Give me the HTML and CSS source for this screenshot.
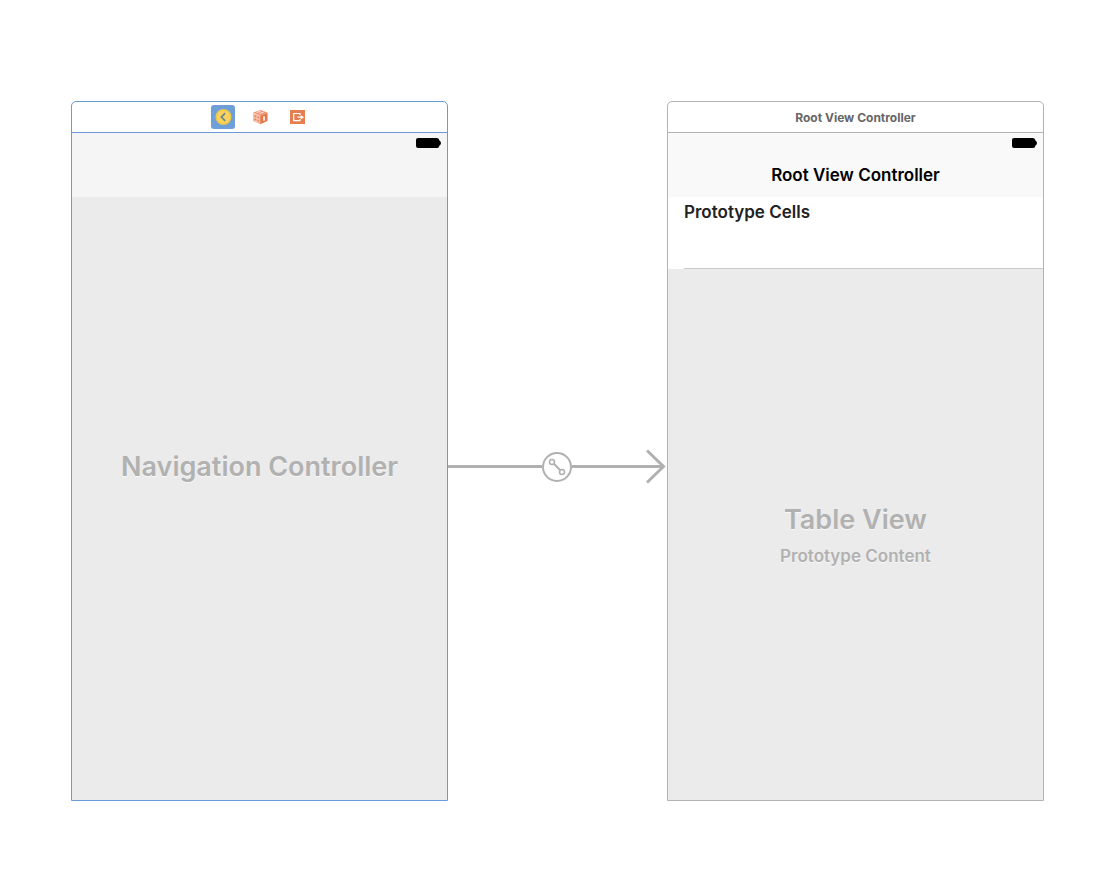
FILE: index.html
```html
<!DOCTYPE html>
<html lang="en">
<head>
<meta charset="utf-8">
<title>Storyboard</title>
<meta name="viewport" content="width=device-width, initial-scale=1">
<link rel="stylesheet" href="styles.css">
</head>
<body>
<main class="storyboard">
  <section class="scene scene-selected" aria-label="Navigation Controller Scene">
    <header class="scene-bar">
      <button class="dock-item dock-active" type="button" aria-label="Navigation Controller">
        <svg width="24" height="24" viewBox="0 0 24 24">
          <circle cx="12.5" cy="12" r="8" fill="#e9c54e"/>
          <circle cx="12.5" cy="12" r="6.6" fill="#fad45a"/>
          <path d="M14.2 8.2 10.4 12l3.8 3.8" fill="none" stroke="#6d8590" stroke-width="1.7"/>
        </svg>
      </button>
      <button class="dock-item" type="button" aria-label="First Responder">
        <svg width="24" height="24" viewBox="0 0 24 24">
          <path d="M5 7.6 12.5 5l7 2.5-7.3 3z" fill="#ef9272"/>
          <path d="M5 8l7.2 2.5v8.8L5 16.1z" fill="#f6bca8"/>
          <path d="M12.2 10.5l7.3-2.7V16l-7.3 3.3z" fill="#e57748"/>
          <path d="M8.5 7.5l4-1.3M11.5 8.6l4.3-1.5" stroke="#fbded3" stroke-width="1.1"/>
          <path d="M6.4 11l1.8.6M6.4 14l1.8.7M9.6 12.2l1.5.5M9.6 15.5l1.5.6" stroke="#e67a4f" stroke-width="1.3"/>
          <path d="M16 11.2v4.6" fill="none" stroke="#fff" stroke-width="1.6"/>
        </svg>
      </button>
      <button class="dock-item" type="button" aria-label="Exit">
        <svg width="24" height="24" viewBox="0 0 24 24">
          <path d="M5 5h15v14H5z" fill="#e77e52"/>
          <path d="M15 10V8.5H8.7v7.2H15V14M12.5 12.2h5.8" fill="none" stroke="#fff" stroke-width="1.2"/>
          <path d="M15.8 10l2.9 2.2-2.9 2.2z" fill="#fff"/>
        </svg>
      </button>
    </header>
    <div class="nav-bar nav-bar-empty">
      <svg class="battery" width="26" height="10" viewBox="0 0 26 10"><path d="M2 0h19q2 0 2.5 2.5Q25 3.5 25 5t-1.5 2.5Q23 10 21 10H2Q0 10 0 8V2Q0 0 2 0z"/></svg>
    </div>
    <div class="placeholder">
      <h1 class="placeholder-title">Navigation Controller</h1>
    </div>
  </section>

  <div class="segue" role="img" aria-label="Root view controller relationship">
    <span class="segue-line"></span>
    <svg class="segue-badge" width="30" height="30" viewBox="0 0 30 30">
      <g fill="none" stroke="#b0b0b0">
        <circle cx="15" cy="15" r="14" stroke-width="2"/>
        <circle cx="10" cy="10" r="2.5" stroke-width="1.5"/>
        <circle cx="20" cy="20" r="2.5" stroke-width="1.5"/>
        <path d="M12 12l6 6" stroke-width="2"/>
      </g>
    </svg>
    <div class="segue-arrow">
      <span class="segue-line"></span>
      <svg class="segue-head" width="20" height="36" viewBox="0 0 20 36"><path d="M0 17.5h18M1 1.5l16.5 16L1 33.5" fill="none" stroke="#b0b0b0" stroke-width="3"/></svg>
    </div>
  </div>

  <section class="scene" aria-label="Root View Controller Scene">
    <header class="scene-bar"><span class="scene-name">Root View Controller</span></header>
    <div class="nav-bar">
      <svg class="battery" width="26" height="10" viewBox="0 0 26 10"><path d="M2 0h19q2 0 2.5 2.5Q25 3.5 25 5t-1.5 2.5Q23 10 21 10H2Q0 10 0 8V2Q0 0 2 0z"/></svg>
      <h2 class="nav-title">Root View Controller</h2>
    </div>
    <div class="cells"><h3 class="cells-title">Prototype Cells</h3></div>
    <div class="placeholder">
      <h1 class="placeholder-title">Table View</h1>
      <p class="placeholder-note">Prototype Content</p>
    </div>
  </section>
</main>
</body>
</html>
```
FILE: styles.css
```css
* {
  box-sizing: border-box;
}

body {
  margin: 0;
  background: #fff;
  font-family: Inter, "Liberation Sans", sans-serif;
}

h1, h2, h3, p {
  margin: 0;
}

.storyboard {
  display: grid;
  grid-template-columns: 377fr 219fr 377fr;
  min-height: 100vh;
  padding: 101px 50px 95px 71px;
}

.scene {
  display: flex;
  flex-direction: column;
  min-width: 0;
  overflow: hidden;
  border: 1px solid #b3b3b3;
  border-radius: 5px 5px 0 0;
}

.scene-selected {
  border-color: #6b9ad8;
}

.scene-bar {
  display: flex;
  align-items: center;
  justify-content: center;
  gap: 13px;
  height: 31px;
  border-bottom: 1px solid #b3b3b3;
}

.scene-selected .scene-bar {
  border-color: #6b9ad8;
}

.dock-item {
  width: 24px;
  height: 24px;
  padding: 0;
  border: 0;
  border-radius: 3px;
  background: none;
}

.dock-item svg {
  display: block;
}

.dock-active {
  background: #6f9fd9;
}

.scene-name {
  padding-top: 2px;
  color: #666;
  font-size: 12px;
  font-weight: 700;
  line-height: 16px;
}

.nav-bar {
  display: flex;
  flex-direction: column;
  align-items: center;
  height: 64px;
  padding: 5px 5px 0;
  background: #f9f9f9;
}

.nav-bar-empty {
  background: #f5f5f5;
}

.battery {
  align-self: flex-end;
}

.nav-title {
  margin-top: 16px;
  color: #000;
  font-size: 17px;
  font-weight: 600;
  line-height: 22px;
}

.cells {
  height: 72px;
  padding: 4px 0 0 16px;
  background: #fff;
}

.cells::after {
  display: block;
  height: 1px;
  margin-top: 45px;
  background: #c8c8c8;
  content: "";
}

.cells-title {
  color: #222;
  font-size: 17px;
  font-weight: 600;
  line-height: 22px;
}

.placeholder {
  display: flex;
  flex: 1;
  flex-direction: column;
  align-items: center;
  justify-content: center;
  padding-top: 2px;
  background: #ebebeb;
  color: #b1b1b1;
  text-align: center;
  text-shadow: 0 1px 0 #f8f8f8;
}

.scene-selected .placeholder {
  padding-bottom: 66px;
}

.placeholder-title {
  font-size: 27px;
  font-weight: 600;
  line-height: 40px;
}

.placeholder-note {
  font-size: 17px;
  font-weight: 600;
  line-height: 32px;
}

.segue {
  display: flex;
  align-items: center;
  padding: 31px 1px 0 0;
}

.segue-line {
  flex: 1;
  height: 3px;
  background: #b0b0b0;
}

.segue-arrow {
  display: flex;
  flex: 1;
  align-items: center;
}

.segue-badge,
.segue-head {
  flex: none;
}
```
